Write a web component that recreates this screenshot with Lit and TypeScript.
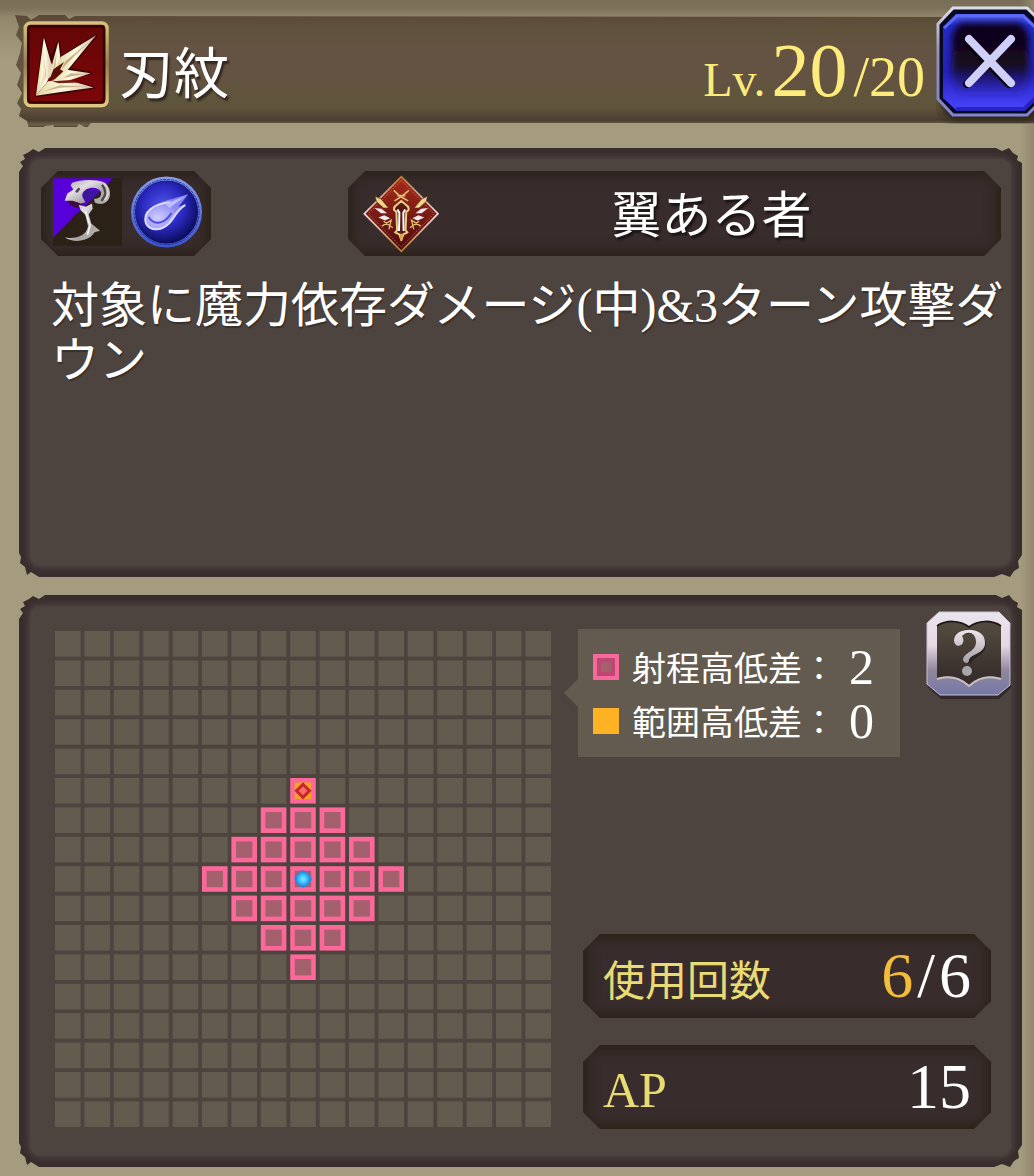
import { LitElement, html, svg, css } from "lit";
import { customElement, property } from "lit/decorators.js";

const GRID_SIZE = 17;
const PITCH = 294;
const CELL = 256;
const CENTER = 8;
const RANGE = 3;

@customElement("range-map")
class RangeMap extends LitElement {
  static styles = css`
    :host { display: block; }
    svg { display: block; width: 100%; height: auto; }
    .cell { fill: #645b4f; }
    .reach { fill: #a5606e; stroke: #fb6899; stroke-width: 46; }
  `;

  private cell(col: number, row: number) {
    const x = col * PITCH;
    const y = row * PITCH;
    const near = Math.abs(col - CENTER) + Math.abs(row - CENTER) <= RANGE;
    if (!near) return svg`<rect class="cell" x=${x} y=${y} width=${CELL} height=${CELL}></rect>`;
    return svg`<rect class="reach" x=${x + 23} y=${y + 23} width=${CELL - 46} height=${CELL - 46}></rect>`;
  }

  render() {
    const span = PITCH * (GRID_SIZE - 1) + CELL;
    const indices = Array.from({ length: GRID_SIZE }, (_, i) => i);
    const mid = CENTER * PITCH + CELL / 2;
    const top = (CENTER - RANGE) * PITCH + CELL / 2;
    return html`<svg viewBox="0 0 ${span} ${span}" role="img" aria-label="射程">
      <defs>
        <radialGradient id="unit"><stop offset="0.2" stop-color="#65e0ff"/><stop offset="0.75" stop-color="#1b95f5"/><stop offset="1" stop-color="#1787e8"/></radialGradient>
      </defs>
      ${indices.map((row) => indices.map((col) => this.cell(col, row)))}
      <g transform="translate(${mid} ${top})">
        <rect x="-84" y="-84" width="168" height="168" fill="#f7a02c"/>
        <path d="M0-86 86 0 0 86-86 0Z" fill="#c9252d"/>
        <path d="M0-44 44 0 0 44-44 0Z" fill="#ff6d68"/>
      </g>
      <g transform="translate(${mid} ${mid})">
        <path d="M0-88 30-72 72-30 88 0 72 30 30 72 0 88-30 72-72 30-88 0-72-30-30-72Z" fill="url(#unit)"/>
      </g>
    </svg>`;
  }
}

@customElement("stat-chip")
class StatChip extends LitElement {
  @property() label = "";
  @property() current = "";
  @property() value = "";

  static styles = css`
    :host {
      display: flex;
      align-items: center;
      justify-content: space-between;
      height: 84px;
      box-sizing: border-box;
      padding: 0 20px;
      background: #382d2c;
      box-shadow: inset 0 0 14px 3px #281e14;
      clip-path: polygon(17px 0, calc(100% - 17px) 0, 100% 17px, 100% calc(100% - 17px), calc(100% - 17px) 100%, 17px 100%, 0 calc(100% - 17px), 0 17px);
    }
    .label { font-size: 42px; line-height: 60px; color: #e9db74; padding-top: 12px; }
    .label.latin { font-size: 50px; padding-top: 6px; }
    .value { display: flex; gap: 4px; font-size: 64px; line-height: 72px; color: #fff; }
    .current { color: #f3bd3b; }
  `;

  render() {
    const latin = /^[A-Z]+$/.test(this.label);
    return html`<span class="label ${latin ? "latin" : ""}">${this.label}</span>
      <span class="value">${this.current ? html`<span class="current">${this.current}</span><span>/</span>` : ""}<span>${this.value}</span></span>`;
  }
}

@customElement("app-root")
class AppRoot extends LitElement {
  static styles = css`
    :host {
      display: block;
      box-sizing: border-box;
      min-height: 100vh;
      overflow: hidden;
      padding: 6px 12px 9px 19px;
      font-family: "Liberation Serif", "Noto Sans CJK JP", serif;
      color: #fff;
      background:
        linear-gradient(to left, #91886d, #91886d00 14px),
        linear-gradient(#786e58, #7c725b 8px, #91886b 17px, #a59c80 60px);
    }
    svg { display: block; }
    button { padding: 0; border: 0; background: none; cursor: pointer; }

    .header {
      position: relative;
      display: flex;
      align-items: flex-start;
      height: 116px;
      margin-right: -12px;
    }
    .header > * { position: relative; }
    .header::before {
      content: "";
      position: absolute;
      inset: 9px 0 -5px -4px;
      background: linear-gradient(#5b4938, #5f533d 14px, #645342 34px, #645342 64px, #5f553c 82px, #5f533c 94px, #59483a 99px, #4a3f2f 105px, #6d634e 110px, #5c4d35 111px);
      clip-path: polygon(0 0, 12px 1px, 16px 5px, 24px 0, 50px 0, 54px 4px, 60px 1px, 100% 2px, 100% 108px, 76px 108px, 72px 113px, 64px 109px, 60px 115px, 50px 112px, 42px 116px, 38px 110px, 30px 111px, 22px 117px, 14px 114px, 12px 106px, 4px 101px, 6px 94px, 2px 88px, 7px 78px, 2px 70px, 6px 58px, 1px 50px, 5px 38px, 7px 28px, 1px 20px, 4px 12px);
    }
    .skill { flex: none; width: 86px; height: 88px; margin: 15px 0 0 4px; }
    .title {
      margin: 29px 0 0 10px;
      font-size: 55px;
      line-height: 80px;
      font-weight: 400;
      text-shadow: 2px 3px 2px #33271e;
    }
    .level {
      display: flex;
      align-items: baseline;
      gap: 6px;
      margin: 24px 11px 0 auto;
      line-height: 80px;
      color: #fdeb7c;
      white-space: nowrap;
    }
    .lv { font-size: 48px; }
    .now { font-size: 76px; }
    .max { font-size: 56px; }
    .close { flex: none; width: 108px; height: 118px; margin-right: -10px; }

    .panel {
      position: relative;
      box-sizing: border-box;
      background: #392d2e;
      clip-path: polygon(
        0 24px, 4px 18px, 1px 14px, 6px 11px, 4px 7px, 10px 4px, 14px 1px, 20px 4px, 26px 0,
        calc(100% - 26px) 0, calc(100% - 20px) 3px, calc(100% - 13px) 0, calc(100% - 9px) 5px, calc(100% - 4px) 8px, calc(100% - 5px) 12px, 100% 15px,
        100% calc(100% - 22px), calc(100% - 4px) calc(100% - 16px), calc(100% - 3px) calc(100% - 9px), calc(100% - 8px) calc(100% - 6px), calc(100% - 12px) 100%, calc(100% - 20px) calc(100% - 3px), calc(100% - 28px) 100%,
        20px 100%, 12px calc(100% - 5px), 8px calc(100% - 2px), 6px calc(100% - 10px), 1px calc(100% - 14px), 2px calc(100% - 20px), 0 calc(100% - 24px));
    }
    .panel::before {
      content: "";
      position: absolute;
      inset: 11px;
      border-radius: 10px;
      background: #4d443f;
      box-shadow: 0 0 6px 2px #4d443f;
    }
    .panel > * { position: relative; }

    .info { min-height: 429px; margin-top: 26px; padding: 23px 10px 24px 22px; }
    .badges { display: flex; justify-content: space-between; margin-right: 11px; }
    .chip {
      display: flex;
      align-items: center;
      box-sizing: border-box;
      height: 85px;
      background: #382d2c;
      box-shadow: inset 0 0 14px 3px #281e14;
      clip-path: polygon(17px 0, calc(100% - 17px) 0, 100% 17px, 100% calc(100% - 17px), calc(100% - 17px) 100%, 17px 100%, 0 calc(100% - 17px), 0 17px);
    }
    .types { width: 170px; padding: 0 8px 4px 12px; gap: 8px; }
    .faction { width: 68%; padding: 0 18px 0 14px; }
    .faction-name {
      flex: 1;
      padding-top: 4px;
      text-align: center;
      font-size: 50px;
      line-height: 72px;
      text-shadow: 2px 3px 2px #1c1414;
    }
    .description {
      margin: 22px 0 0 10px;
      font-size: 48px;
      line-height: 55px;
      text-shadow: 1px 2px 1px #3a302c;
    }

    .range {
      display: grid;
      grid-template-columns: minmax(0, 496fr) minmax(0, 432fr);
      column-gap: 27px;
      margin-top: 18px;
      padding: 16px 12px 38px 36px;
    }
    .map { margin: 20px 0 2px; }
    .side { display: flex; flex-direction: column; justify-content: space-between; }
    .side-top { display: flex; justify-content: space-between; align-items: flex-start; }
    .legend {
      position: relative;
      display: grid;
      gap: 2px;
      margin: 18px 0 0;
      padding: 12px 26px 10px 15px;
      background: #645b50;
    }
    .legend::before {
      content: "";
      position: absolute;
      left: -14px;
      top: 50px;
      width: 14px;
      height: 28px;
      background: #645b50;
      clip-path: polygon(100% 0, 100% 100%, 0 50%);
    }
    .row { display: flex; align-items: center; height: 52px; font-size: 34px; line-height: 48px; white-space: nowrap; }
    .name { padding-top: 6px; }
    .swatch { width: 26px; height: 26px; margin-right: 13px; box-sizing: border-box; background: #ffb224; }
    .swatch.reach { background: #a5606e; border: 4px solid #f7699b; box-shadow: inset 0 0 0 4px #bd4672; }
    .amount { margin-left: 13px; font-size: 50px; }
    .help { width: 84px; height: 90px; }
    .stats { display: grid; gap: 27px; margin: 0 19px 0 5px; }
  `;

  private skillIcon() {
    return html`<svg class="skill" viewBox="68 64 260 266" aria-hidden="true">
      <defs>
        <linearGradient id="gold" x2="0" y2="1"><stop stop-color="#d8c17c"/><stop offset=".5" stop-color="#9a7e4d"/><stop offset="1" stop-color="#dfc981"/></linearGradient>
        <linearGradient id="red" x2="0" y2="1"><stop stop-color="#640607"/><stop offset="1" stop-color="#7d0708"/></linearGradient>
        <linearGradient id="blade" x2="1"><stop stop-color="#e2d5a0"/><stop offset=".5" stop-color="#fffbe3"/><stop offset="1" stop-color="#d2b6a0"/></linearGradient>
      </defs>
      <rect x="70" y="66" width="256" height="262" rx="22" fill="#46351f"/>
      <rect x="75" y="70" width="247" height="250" rx="16" fill="url(#red)" stroke="url(#gold)" stroke-width="11"/>
      <rect x="84" y="80" width="229" height="230" rx="10" fill="none" stroke="#350506" stroke-width="8"/>
      <path d="M109 290 131 116 152 180 175 128 182 174 289 108 206 208 273 222 186 240 282 265 188 280Z" fill="none" stroke="#3b0505" stroke-width="8" stroke-linejoin="round"/>
      <path d="M107 290 131 114 152 188 160 204 140 250Z" fill="url(#blade)"/>
      <path d="M146 236 156 196 175 126 182 182 200 178 163 228Z" fill="url(#blade)"/>
      <path d="M166 204 183 172 289 107 203 212 182 224Z" fill="url(#blade)"/>
      <path d="M154 242 200 211 273 222 216 241 182 249Z" fill="url(#blade)"/>
      <path d="M107 290 144 246 196 240 282 265 188 278Z" fill="url(#blade)"/>
      <path d="M146 246 160 210 192 188 180 210 190 216 164 240Z" fill="#5a0c0a"/>
      <path d="M156 246 212 242 240 250 176 252Z" fill="#7a1c14"/>
      <path d="m128 150 2 66-12 54 20-40ZM170 160 166 200 158 214ZM266 128 196 186 184 210ZM212 222 250 224 190 236ZM130 276 180 258 250 262 180 266Z" fill="#a98c57" opacity=".6"/>
      <path d="m118 272 12-112 6 70Z" fill="#fff9dc" opacity=".7"/>
    </svg>`;
  }

  private closeIcon() {
    return html`<svg width="108" height="118" viewBox="0 0 108 118" aria-hidden="true">
      <defs>
        <linearGradient id="rim" x2="0" y2="1"><stop stop-color="#dddde8"/><stop offset=".4" stop-color="#9494b4"/><stop offset="1" stop-color="#8184d2"/></linearGradient>
        <linearGradient id="blue" x2="0" y2="1"><stop stop-color="#5963f6"/><stop offset=".12" stop-color="#242bc8"/><stop offset=".6" stop-color="#2321b9"/><stop offset="1" stop-color="#4944ff"/></linearGradient>
        <linearGradient id="core" x2="0" y2="1"><stop stop-color="#100619"/><stop offset=".6" stop-color="#130720"/><stop offset="1" stop-color="#2418a0" stop-opacity=".3"/></linearGradient>
        <filter id="soft" x="-20%" y="-20%" width="140%" height="140%"><feGaussianBlur stdDeviation="4"/></filter>
        <filter id="glow" x="-20%" y="-20%" width="140%" height="140%"><feGaussianBlur stdDeviation="3"/></filter>
      </defs>
      <path d="M16 9H94L110 24V102L94 115H16L6 104Z" fill="#272112" filter="url(#soft)"/>
      <path d="M17 2H91L107 18V93L91 109H17L2 93V18Z" fill="#080724" stroke="url(#rim)" stroke-width="3"/>
      <path d="M20 8H88L101 21V92L88 104H20L7 92V21Z" fill="url(#blue)"/>
      <path d="M20 103H88L101 91" fill="none" stroke="#2725bb" stroke-width="4"/>
      <path d="M8 22 21 10H87L100 22" fill="none" stroke="#5b6bf5" stroke-width="3"/>
      <path d="M24 17H84L93 28V74L84 88H24L16 74V28Z" fill="url(#core)" filter="url(#glow)"/>
      <path d="M31 36 73 78M73 36 31 78" stroke="#080210" stroke-width="8" stroke-linecap="round"/>
      <path d="M33 33 75 77M75 33 33 77" stroke="#cfd0f7" stroke-width="8" stroke-linecap="round"/>
    </svg>`;
  }

  private weaponIcon() {
    return html`<svg width="70" height="68" viewBox="25 24 207 203" role="img" aria-label="鎌">
      <defs>
        <linearGradient id="steel" x2="1" y2="1"><stop stop-color="#a8a0ac"/><stop offset=".35" stop-color="#e1dde0"/><stop offset=".65" stop-color="#a7a3a5"/><stop offset="1" stop-color="#b9b9ad"/></linearGradient>
        <filter id="smooth"><feGaussianBlur stdDeviation="1"/></filter>
      </defs>
      <path d="M25 24H232V227H25Z" fill="#2b2117"/>
      <path d="M25 24H205L25 203Z" fill="#5700da"/>
      <path d="M62 202 84 140 100 128 124 140 128 190Z" fill="#2b2117"/>
      <g filter="url(#smooth)">
        <path d="M66 86 92 90 112 104 100 114 78 106Z" fill="#3c0a3c"/>
        <path d="M82 38C104 28 150 26 178 36 196 48 202 72 190 90 180 102 162 104 150 96L148 86C166 86 172 76 168 64 160 50 138 50 124 58 114 66 110 74 116 84L122 96 108 100 84 92 60 92 68 70 86 58 78 46Z" fill="url(#steel)"/>
        <path d="M122 60C132 54 152 56 158 70 154 82 140 84 126 96 110 82 110 70 122 60Z" fill="#3c14a0"/>
        <path d="M104 54 94 66 100 60ZM172 44C184 58 186 76 170 92" fill="none" stroke="#4c4548" stroke-width="7"/>
        <path d="M178 40C194 56 192 78 180 90" fill="none" stroke="#d8d3cf" stroke-width="6"/>
        <path d="M102 104 124 110 142 100 144 116 132 132 140 160 166 182 150 186 138 200C114 216 84 216 60 202 96 208 126 194 130 168L122 134 108 120Z" fill="url(#steel)"/>
        <path d="M122 122 136 166 128 194" fill="none" stroke="#f4eff0" stroke-width="6"/>
      </g>
    </svg>`;
  }

  private magicIcon() {
    return html`<svg width="74" height="74" viewBox="0 0 74 74" role="img" aria-label="魔法">
      <defs>
        <radialGradient id="orb" cx=".45" cy=".42" r=".58"><stop stop-color="#5555ef"/><stop offset=".55" stop-color="#2929bd"/><stop offset="1" stop-color="#09094f"/></radialGradient>
        <linearGradient id="ring" x2="0" y2="1"><stop stop-color="#879cec"/><stop offset="1" stop-color="#3e54d0"/></linearGradient>
        <radialGradient id="comet" cx=".3" cy=".65"><stop stop-color="#d0ccff"/><stop offset="1" stop-color="#8888f4"/></radialGradient>
      </defs>
      <circle cx="37" cy="37" r="34" fill="url(#orb)" stroke="url(#ring)" stroke-width="4"/>
      <circle cx="37" cy="37" r="33" fill="none" stroke="#26348e" stroke-width="1" stroke-dasharray="3 1"/>
      <path d="M59 19 42 24C28 27 16 35 15 45 15 54 25 58 33 54 44 50 46 39 57 29L49 32Z" fill="url(#comet)"/>
      <path d="M41 27C23 29 13 37 16 48 20 57 33 56 40 48 45 42 47 35 56 30" fill="none" stroke="#dfdcff" stroke-width="2"/>
      <path d="M19 42C23 50 34 51 42 38" fill="none" stroke="#4d4de0" stroke-width="2"/>
      <path d="m36 29 20-8-16 12Z" fill="#c0bdff"/>
    </svg>`;
  }

  private factionIcon() {
    return html`<svg width="78" height="78" viewBox="66 43 234 238" aria-hidden="true">
      <defs>
        <linearGradient id="crest" x2="0" y2="1"><stop stop-color="#a72b1a"/><stop offset="1" stop-color="#4d0b0e"/></linearGradient>
        <linearGradient id="edge" x2="0" y2="1"><stop stop-color="#c27a38"/><stop offset=".5" stop-color="#efd8df"/><stop offset="1" stop-color="#b97b35"/></linearGradient>
      </defs>
      <path d="M184 48 296 161 184 276 71 161Z" fill="url(#crest)" stroke="url(#edge)" stroke-width="5"/>
      <path d="M184 60 284 161 184 263 83 161Z" fill="none" stroke="#d39a70" stroke-width="2" stroke-dasharray="4 4"/>
      <path d="M104 108 122 116 145 144 130 144 108 124ZM264 108 246 116 223 144 238 144 260 124Z" fill="#edd58c" stroke="#5b2912" stroke-width="2"/>
      <path d="M162 150C158 138 172 134 184 122 196 134 210 138 206 150L199 156 197 212 203 218 190 224 184 242 178 224 165 218 171 212 169 156Z" fill="#5a1814" stroke="#e9cf88" stroke-width="6" stroke-linejoin="round"/>
      <path d="M172 148 178 158 177 214M196 148 190 158 191 214" fill="none" stroke="#fff" stroke-width="6"/>
      <path d="M184 222V240" stroke="#d3a44c" stroke-width="8"/>
      <g fill="none" stroke="#e0bd70" stroke-width="5">
        <path d="M161 90 180 108 205 122M207 90 188 106 163 122M172 106H196"/>
        <path d="M125 199 153 181 146 209M130 184 158 204M243 199 215 181 222 209M238 184 210 204" stroke-width="4"/>
      </g>
      <path d="M102 144 123 146 141 160 122 160ZM114 173 132 166 150 175 134 182ZM266 144 245 146 227 160 246 160ZM254 173 236 166 218 175 234 182Z" fill="#f1e9ee"/>
    </svg>`;
  }

  private helpIcon() {
    return html`<svg width="86" height="90" viewBox="0 0 86 90" aria-hidden="true">
      <defs>
        <linearGradient id="silver" x2="0" y2="1"><stop stop-color="#e9e4ee"/><stop offset=".4" stop-color="#e7d9e5"/><stop offset=".7" stop-color="#8f889c"/><stop offset="1" stop-color="#7677a8"/></linearGradient>
        <linearGradient id="page" x2="0" y2="1"><stop stop-color="#554c40"/><stop offset="1" stop-color="#332a2a"/></linearGradient>
        <linearGradient id="mark" x2="0" y2="1"><stop stop-color="#eee6ea"/><stop offset="1" stop-color="#a5a0a6"/></linearGradient>
      </defs>
      <path d="M13 4H75L85 17V77L73 88H15L2 76V15Z" fill="#30282b"/>
      <path d="M13 1H73L84 12V74L72 84H14L1 73V12Z" fill="url(#silver)" stroke="#c9c2d0" stroke-width="1"/>
      <path d="M11 15C20 9 34 9 43 16 52 9 66 9 75 15V67C65 64 53 65 43 74 33 65 21 64 11 67Z" fill="url(#page)"/>
      <path d="M11 15C20 9 34 9 43 16 52 9 66 9 75 15" fill="none" stroke="#211a17" stroke-width="2"/>
      <path d="M11 68C21 65 33 66 43 75 53 66 65 65 75 68" fill="none" stroke="#c7c1ba" stroke-width="2"/>
      <path d="M30 31C30 17 57 16 58 33 58 44 45 44 43 52" fill="none" stroke="#2b2423" stroke-width="4"/>
      <path d="M35 34C38 32 38 28 36 25 41 19 50 21 50 31 50 41 38 41 37 49 38 53 43 53 43 49 44 43 60 43 59 31 59 15 29 15 28 29 28 34 32 36 35 34Z" fill="url(#mark)"/>
      <circle cx="41" cy="60" r="5" fill="#aaa5a9"/>
    </svg>`;
  }

  render() {
    return html`
      <header class="header">
        ${this.skillIcon()}
        <h1 class="title">刃紋</h1>
        <div class="level"><span class="lv">Lv.</span><span class="now">20</span><span class="max">/20</span></div>
        <button class="close" type="button" aria-label="閉じる">${this.closeIcon()}</button>
      </header>

      <section class="panel info">
        <div class="badges">
          <div class="chip types">${this.weaponIcon()}${this.magicIcon()}</div>
          <div class="chip faction">${this.factionIcon()}<span class="faction-name">翼ある者</span></div>
        </div>
        <p class="description">対象に魔力依存ダメージ(中)&amp;3ターン攻撃ダウン</p>
      </section>

      <section class="panel range">
        <range-map class="map"></range-map>
        <div class="side">
          <div class="side-top">
            <div class="legend">
              <div class="row"><span class="swatch reach"></span><span class="name">射程高低差：</span><span class="amount">2</span></div>
              <div class="row"><span class="swatch"></span><span class="name">範囲高低差：</span><span class="amount">0</span></div>
            </div>
            <button class="help" type="button" aria-label="ヘルプ">${this.helpIcon()}</button>
          </div>
          <div class="stats">
            <stat-chip label="使用回数" current="6" value="6"></stat-chip>
            <stat-chip label="AP" value="15"></stat-chip>
          </div>
        </div>
      </section>
    `;
  }
}
